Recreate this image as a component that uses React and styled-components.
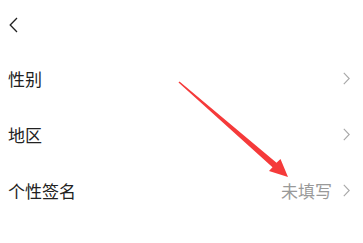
import React from "react";
import styled, { createGlobalStyle } from "styled-components";

const GlobalStyle = createGlobalStyle`
  html, body {
    margin: 0;
    padding: 0;
    background: #fff;
  }
  body {
    font-family: "Noto Sans CJK SC", "Noto Sans", sans-serif;
  }
`;

const Page = styled.div`
  position: relative;
  width: 363px;
  height: 243px;
  overflow: hidden;
  background: #fff;
`;

const Header = styled.div`
  display: flex;
  align-items: center;
  height: 50px;
  padding-left: 9px;
`;

const BackButton = styled.button`
  display: flex;
  align-items: center;
  justify-content: center;
  padding: 0;
  border: none;
  background: none;
  color: #222;
  cursor: pointer;
`;

const List = styled.div`
  display: flex;
  flex-direction: column;
`;

const Row = styled.div`
  display: flex;
  align-items: center;
  height: 56px;
  padding: 0 13px 0 8px;
`;

const Label = styled.div`
  flex: 1;
  font-size: 17px;
  color: #222;
`;

const Value = styled.div`
  font-size: 17px;
  color: #999;
  margin-right: 11px;
`;

const Chevron = styled.svg`
  display: block;
  flex-shrink: 0;
`;

const Overlay = styled.svg`
  position: absolute;
  left: 0;
  top: 0;
  pointer-events: none;
`;

const rows = [
  { label: "性别" },
  { label: "地区" },
  { label: "个性签名", value: "未填写" },
];

const RightChevron = () => (
  <Chevron width="7" height="13" viewBox="0 0 7 13">
    <path d="M0.8 0.8 L6.2 6.5 L0.8 12.2" fill="none" stroke="#a8a8a8" strokeWidth="1.1" />
  </Chevron>
);

const App = () => (
  <Page>
    <GlobalStyle />
    <Header>
      <BackButton>
        <svg width="9" height="16" viewBox="0 0 9 16">
          <path d="M8 1 L1.2 8 L8 15" fill="none" stroke="currentColor" strokeWidth="1.3" />
        </svg>
      </BackButton>
    </Header>
    <List>
      {rows.map((row) => (
        <Row key={row.label}>
          <Label>{row.label}</Label>
          {row.value && <Value>{row.value}</Value>}
          <RightChevron />
        </Row>
      ))}
    </List>
    <Overlay width="363" height="243" viewBox="0 0 363 243">
      <polygon
        points="178.5,82.5 179.5,81.5 276.5,162.8 280.5,159 288,177 269,171 272.5,167.2"
        fill="#f53a3a"
      />
    </Overlay>
  </Page>
);

export default App;
